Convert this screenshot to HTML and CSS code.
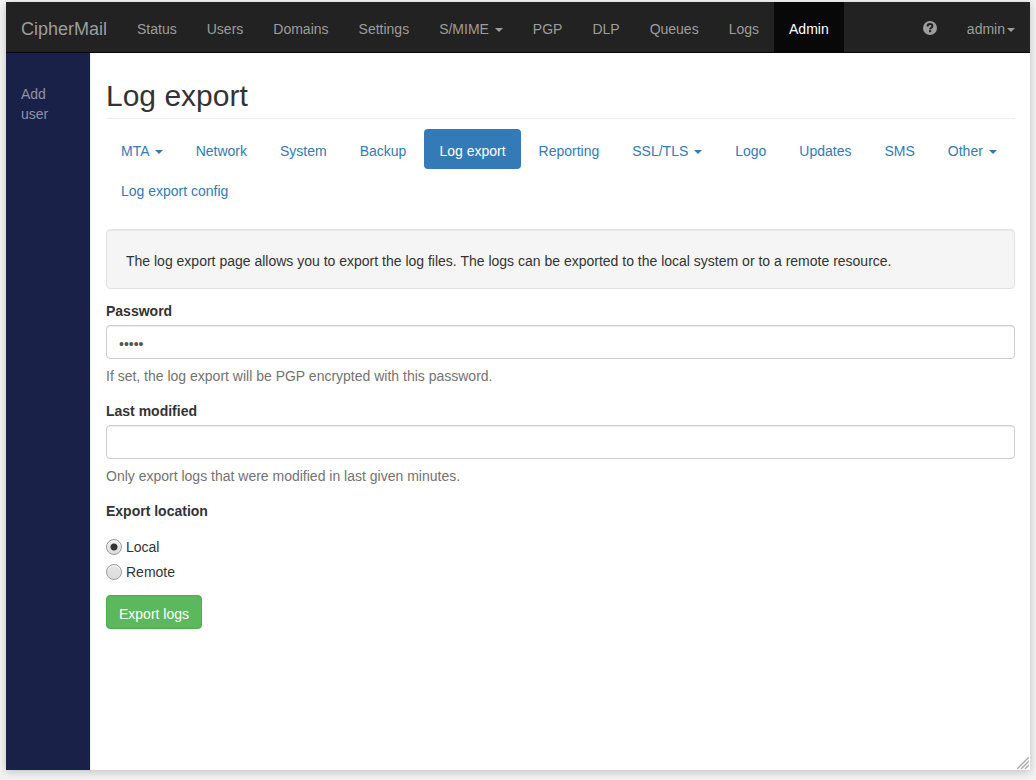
FILE: index.html
```
<!DOCTYPE html>
<html lang="en">
<head>
    <meta charset="UTF-8">
    <meta name="viewport" content="width=device-width, initial-scale=1.0">
    <title>CipherMail - Log export</title>
    <link rel="stylesheet" href="styles.css">
</head>
<body>
    <div class="window">

        <!-- Top navigation -->
        <nav class="navbar">
            <a class="navbar-brand" href="#">CipherMail</a>
            <ul class="navbar-nav">
                <li><a href="#">Status</a></li>
                <li><a href="#">Users</a></li>
                <li><a href="#">Domains</a></li>
                <li><a href="#">Settings</a></li>
                <li><a href="#">S/MIME <span class="caret"></span></a></li>
                <li><a href="#">PGP</a></li>
                <li><a href="#">DLP</a></li>
                <li><a href="#">Queues</a></li>
                <li><a href="#">Logs</a></li>
                <li class="active"><a href="#">Admin</a></li>
            </ul>
            <ul class="navbar-nav navbar-right">
                <li>
                    <a href="#" aria-label="Help">
                        <svg class="icon" viewBox="0 0 14 14" aria-hidden="true">
                            <circle cx="7" cy="7" r="7" fill="currentColor"/>
                            <path d="M4.6 5.4C4.6 3.8 5.6 3.1 7 3.1s2.4.8 2.4 2.1c0 1.6-2.3 1.6-2.3 3.2" fill="none" stroke="#222" stroke-width="2"/>
                            <rect x="6" y="9.2" width="2.2" height="2" fill="#222"/>
                        </svg>
                    </a>
                </li>
                <li><a href="#">admin<span class="caret"></span></a></li>
            </ul>
        </nav>

        <div class="main">
            <aside class="sidebar">
                <a href="#">Add user</a>
            </aside>

            <main class="content">
                <h1>Log export</h1>

                <ul class="pills">
                    <li><a href="#">MTA <span class="caret"></span></a></li>
                    <li><a href="#">Network</a></li>
                    <li><a href="#">System</a></li>
                    <li><a href="#">Backup</a></li>
                    <li class="active"><a href="#">Log export</a></li>
                    <li><a href="#">Reporting</a></li>
                    <li><a href="#">SSL/TLS <span class="caret"></span></a></li>
                    <li><a href="#">Logo</a></li>
                    <li><a href="#">Updates</a></li>
                    <li><a href="#">SMS</a></li>
                    <li><a href="#">Other <span class="caret"></span></a></li>
                </ul>
                <ul class="pills">
                    <li><a href="#">Log export config</a></li>
                </ul>

                <div class="well">The log export page allows you to export the log files. The logs can be exported to the local system or to a remote resource.</div>

                <form>
                    <div class="form-group">
                        <label for="password">Password</label>
                        <input type="password" id="password" class="form-control" value="admin">
                        <p class="help-block">If set, the log export will be PGP encrypted with this password.</p>
                    </div>
                    <div class="form-group">
                        <label for="last-modified">Last modified</label>
                        <input type="text" id="last-modified" class="form-control">
                        <p class="help-block">Only export logs that were modified in last given minutes.</p>
                    </div>
                    <fieldset>
                        <legend>Export location</legend>
                        <label class="radio"><input type="radio" name="location" checked> Local</label>
                        <label class="radio"><input type="radio" name="location"> Remote</label>
                    </fieldset>
                    <button type="submit" class="btn">Export logs</button>
                </form>
            </main>
        </div>

        <!-- Resize grip -->
        <svg class="grip" viewBox="0 0 12 12" aria-hidden="true">
            <path d="M0 12L12 0M4 12L12 4M8 12L12 8" stroke="#aaa" stroke-width="1.4"/>
        </svg>
    </div>
</body>
</html>
```

FILE: styles.css
```
* {
    box-sizing: border-box;
}

body {
    margin: 0;
    padding: 2px 6px 10px;
    background: #f2f2f2;
    color: #333;
    font-family: "Liberation Sans", Helvetica, Arial, sans-serif;
    font-size: 14px;
    line-height: 20px;
}

a {
    color: #337ab7;
    text-decoration: none;
}

ul {
    list-style: none;
    margin: 0;
    padding: 0;
}

.window {
    position: relative;
    display: flex;
    flex-direction: column;
    min-height: calc(100vh - 12px);
    background: #fff;
    box-shadow: 0 2px 8px rgba(0, 0, 0, 0.2);
}

.caret {
    display: inline-block;
    margin-left: 2px;
    vertical-align: middle;
    border-top: 4px solid;
    border-left: 4px solid transparent;
    border-right: 4px solid transparent;
}

/* Navbar */
.navbar {
    display: flex;
    background: #222;
    border-bottom: 1px solid #080808;
}

.navbar a {
    display: block;
    padding: 17px 15px 13px;
    color: #9d9d9d;
}

.navbar .navbar-brand {
    font-size: 18px;
}

.navbar-nav {
    display: flex;
}

.navbar-nav .active a {
    background: #080808;
    color: #fff;
}

.navbar-right {
    margin-left: auto;
}

.icon {
    display: block;
    width: 14px;
    height: 14px;
    margin-top: 2px;
}

/* Sidebar */
.main {
    display: flex;
    flex: 1;
}

.sidebar {
    flex: 0 0 85px;
    padding: 31px 15px;
    background: #1a2149;
    border-right: 1px solid #eee;
}

.sidebar a {
    display: block;
    color: #8f93a5;
}

/* Content */
.content {
    flex: 1;
    min-width: 0;
    padding: 26px 15px;
}

h1 {
    margin: 0 0 10px;
    padding-bottom: 5px;
    border-bottom: 1px solid #eee;
    font-size: 30px;
    font-weight: normal;
    line-height: 34px;
}

.pills {
    display: flex;
    flex-wrap: wrap;
    gap: 3px;
}

.pills a {
    display: block;
    padding: 12px 15px 8px;
    border-radius: 4px;
}

.pills .active a {
    background: #337ab7;
    color: #fff;
}

.well {
    margin: 20px 0 12px;
    padding: 21px 19px 17px;
    background: #f5f5f5;
    border: 1px solid #e3e3e3;
    border-radius: 4px;
    box-shadow: inset 0 1px 1px rgba(0, 0, 0, 0.05);
}

.form-group {
    margin-bottom: 15px;
}

.form-group label,
legend {
    display: block;
    padding: 0;
    margin-bottom: 4px;
    font-weight: bold;
}

.form-control {
    display: block;
    width: 100%;
    height: 34px;
    padding: 8px 12px 4px;
    border: 1px solid #ccc;
    border-radius: 4px;
    background: #fff;
    box-shadow: inset 0 1px 1px rgba(0, 0, 0, 0.075);
    color: #555;
    font: inherit;
}

.help-block {
    margin: 7px 0 0;
    color: #737373;
}

fieldset {
    margin: 0 0 8px;
    padding: 0;
    border: 0;
}

legend {
    margin-bottom: 16px;
}

.radio {
    display: flex;
    align-items: center;
    gap: 4px;
    width: fit-content;
    margin-bottom: 5px;
}

.radio input {
    appearance: none;
    width: 16px;
    height: 16px;
    margin: 0;
    border: 1px solid #999;
    border-radius: 50%;
    background: linear-gradient(#e6e6e6, #dcdcdc);
    box-shadow: inset 0 1px 1px #fff;
}

.radio input:checked {
    background: radial-gradient(circle, #333 3px, transparent 4px), linear-gradient(#f2f2f2, #dcdcdc);
}

.btn {
    display: block;
    padding: 8px 12px 4px;
    background: #5cb85c;
    border: 1px solid #4cae4c;
    border-radius: 4px;
    color: #fff;
    font: inherit;
    cursor: pointer;
}

.grip {
    position: absolute;
    right: 1px;
    bottom: 1px;
    width: 12px;
    height: 12px;
}
```
